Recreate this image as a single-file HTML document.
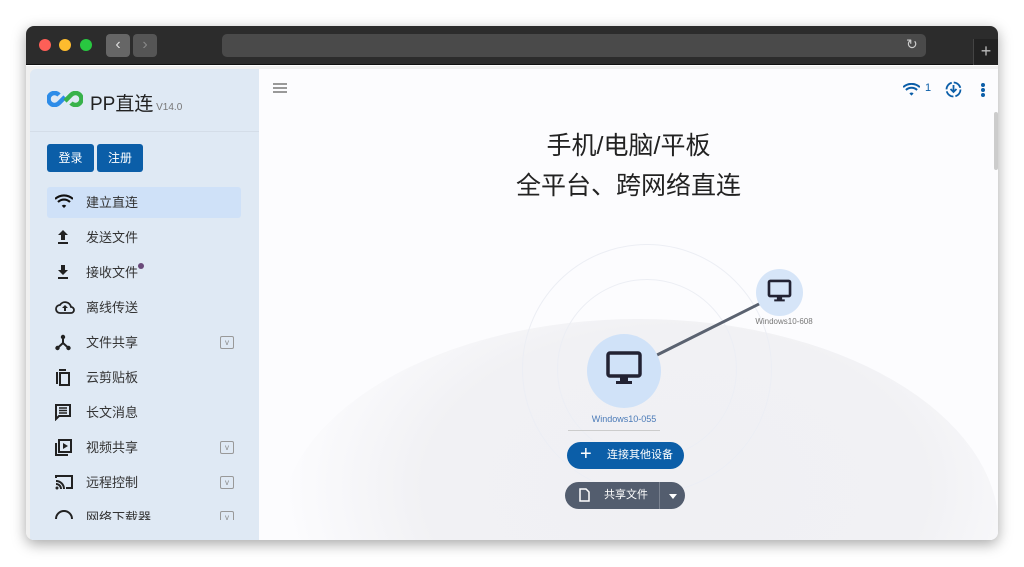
<!DOCTYPE html>
<html><head><meta charset="utf-8"><style>
*{margin:0;padding:0;box-sizing:border-box}
html,body{overflow:hidden}
body{width:1024px;height:567px;background:#fff;font-family:"Liberation Sans","Noto Sans CJK SC",sans-serif;position:relative}
.win{position:absolute;left:26px;top:26px;width:972px;height:514px;border-radius:8px;overflow:hidden;box-shadow:0 4px 14px rgba(0,0,0,.35);background:#fff}
.bar{position:absolute;left:0;top:0;width:972px;height:39px;background:#2c2c2c;border-bottom:1px solid #111}
.dot{position:absolute;top:13px;width:12px;height:12px;border-radius:50%}
.nav{position:absolute;top:8px;width:24px;height:23px;background:#555;border-radius:4px;color:#ddd;font-size:16px;text-align:center;line-height:22px}
.url{position:absolute;left:196px;top:8px;width:704px;height:23px;background:#4a4a4a;border-radius:5px}
.side{position:absolute;left:4px;top:43px;width:229px;height:471px;background:#dfe9f4;border-radius:6px 0 0 0;overflow:hidden}
.clip{position:absolute;left:0;top:0;width:229px;height:451px;overflow:hidden}
.item{position:absolute;left:17px;width:194px;height:31px;font-size:13px;color:#333;line-height:31px;padding-left:39px}
.item svg{position:absolute;left:8px;top:7px}
.v{position:absolute;left:173px;top:9px;width:14px;height:13px;border:1px solid #999;border-radius:2px;font-size:8px;line-height:11px;text-align:center;color:#888;padding:0}
.btn{position:absolute;top:75px;height:28px;background:#0b5ea8;color:#fff;font-size:12px;line-height:28px;text-align:center;border-radius:3px}
.main{position:absolute;left:233px;top:43px;width:739px;height:471px;background:#fcfcfe;overflow:hidden}
</style></head><body>
<div class="win">
<div class="bar">
<div class="dot" style="left:13px;background:#fe5f57"></div>
<div class="dot" style="left:33px;background:#febc2e"></div>
<div class="dot" style="left:54px;background:#28c840"></div>
<div class="nav" style="left:80px;background:#666">‹</div>
<div class="nav" style="left:107px;color:#888">›</div>
<div class="url"></div>
<div style="position:absolute;left:880px;top:10px;color:#ccc;font-size:14px">↻</div>
<div style="position:absolute;left:947px;top:13px;width:25px;height:26px;background:#222;color:#bbb;font-size:18px;text-align:center;line-height:25px;border-left:1px solid #444">+</div>
</div>
<div style="position:absolute;left:0;top:40px;width:972px;height:474px;background:#f0f0f0"></div>
<div class="side"><div class="clip">
<svg style="position:absolute;left:17px;top:22px" width="36" height="16" viewBox="0 0 36 16"><path d="M12 4 A6 6 0 1 0 12 12 L18 6" stroke="#2d8ce8" stroke-width="4.5" fill="none"/><path d="M18 10 L24 4 A6 6 0 1 1 24 12" stroke="#38b24a" stroke-width="4.5" fill="none"/></svg>
<div style="position:absolute;left:60px;top:20px;font-size:19px;color:#222">PP直连<span style="font-size:10px;color:#777"> V14.0</span></div>
<div style="position:absolute;left:0;top:62px;width:229px;height:1px;background:#d4dde8"></div>
<div class="btn" style="left:17px;width:47px">登录</div>
<div class="btn" style="left:67px;width:46px">注册</div>
<div class="item" style="top:118px;background:#cfe1f8;border-radius:3px">建立直连<svg width="18" height="16" viewBox="0 0 24 20"><path d="M12 18l3-3a4 4 0 0 0-6 0zM5 11a10 10 0 0 1 14 0l2-2a13 13 0 0 0-18 0zM1 7a16 16 0 0 1 22 0l2-2a19 19 0 0 0-26 0z" fill="#111"/></svg></div>
<div class="item" style="top:153px">发送文件<svg width="16" height="16" viewBox="0 0 16 16"><path d="M3 13h10v2H3zM8 1l5 5H10v5H6V6H3z" fill="#222"/></svg></div>
<div class="item" style="top:188px">接收文件<span style="position:absolute;left:91px;top:6px;width:6px;height:6px;border-radius:50%;background:#6a4a7a"></span><svg width="16" height="16" viewBox="0 0 16 16"><path d="M3 13h10v2H3zM8 11l5-5H10V1H6v5H3z" fill="#222"/></svg></div>
<div class="item" style="top:223px">离线传送<svg width="20" height="16" viewBox="0 0 20 16"><path d="M5 14a4 4 0 0 1 0-8 6 6 0 0 1 11 2 3 3 0 0 1 0 6z" fill="none" stroke="#222" stroke-width="1.8"/><path d="M10 6l3 3h-2v3H9V9H7z" fill="#222"/></svg></div>
<div class="item" style="top:258px">文件共享<svg width="16" height="17" viewBox="0 0 16 17"><circle cx="8" cy="3" r="2.2" fill="#222"/><circle cx="2.5" cy="14" r="2.2" fill="#222"/><circle cx="13.5" cy="14" r="2.2" fill="#222"/><path d="M8 3v6L2.5 14M8 9l5.5 5" stroke="#222" stroke-width="2" fill="none"/></svg><span class="v">v</span></div>
<div class="item" style="top:293px">云剪贴板<svg width="16" height="18" viewBox="0 0 16 18"><path d="M2 3v12" stroke="#222" stroke-width="2"/><rect x="5" y="4" width="9" height="12" fill="none" stroke="#222" stroke-width="2"/><path d="M4 1h7" stroke="#222" stroke-width="2"/></svg></div>
<div class="item" style="top:328px">长文消息<svg width="16" height="17" viewBox="0 0 16 17"><path d="M1 1h14v11H4l-3 3z" fill="none" stroke="#222" stroke-width="2"/><path d="M4 4h8M4 6.5h8M4 9h8" stroke="#222" stroke-width="1.5"/></svg></div>
<div class="item" style="top:363px">视频共享<svg width="17" height="17" viewBox="0 0 17 17"><path d="M1 4v12h12" fill="none" stroke="#222" stroke-width="2"/><rect x="4" y="1" width="12" height="12" fill="none" stroke="#222" stroke-width="2"/><path d="M8 4l5 3-5 3z" fill="#222"/></svg><span class="v">v</span></div>
<div class="item" style="top:398px">远程控制<svg width="18" height="16" viewBox="0 0 18 16"><path d="M1 4V2h16v12h-6" fill="none" stroke="#222" stroke-width="2"/><path d="M1 7a8 8 0 0 1 8 8M1 10a5 5 0 0 1 5 5" fill="none" stroke="#222" stroke-width="2"/><circle cx="2" cy="14" r="1.5" fill="#222"/></svg><span class="v">v</span></div>
<div class="item" style="top:433px">网络下载器<svg width="18" height="10" viewBox="0 0 18 10"><path d="M1 10a8 8 0 0 1 16 0" fill="none" stroke="#222" stroke-width="2"/></svg><span class="v">v</span></div>
</div></div>
<div class="main">
<div style="position:absolute;left:20px;top:250px;width:720px;height:420px;border-radius:50%;background:radial-gradient(ellipse at 55% 40%,#f0f0f3 0%,#f1f1f4 45%,rgba(252,252,254,0) 70%)"></div>
<div style="position:absolute;left:263px;top:175px;width:250px;height:250px;border-radius:50%;border:1px solid #eceef4"></div>
<div style="position:absolute;left:298px;top:210px;width:180px;height:180px;border-radius:50%;border:1px solid #eceef4"></div>
<div style="position:absolute;left:14px;top:14px;width:14px;height:2px;background:#999;box-shadow:0 4px 0 #999,0 8px 0 #999"></div>
<div style="position:absolute;left:0;top:57px;width:739px;text-align:center;font-size:25px;line-height:40px;color:#222">手机/电脑/平板<br>全平台、跨网络直连</div>
<svg style="position:absolute;left:0;top:0" width="739" height="471"><line x1="396" y1="287" x2="520" y2="225" stroke="#5a6270" stroke-width="3"/></svg>
<div style="position:absolute;left:328px;top:265px;width:74px;height:74px;border-radius:50%;background:#d0e2f8"></div>
<svg style="position:absolute;left:346px;top:281px" width="38" height="38" viewBox="0 0 38 38"><rect x="3" y="3" width="32" height="23" rx="2" fill="none" stroke="#223" stroke-width="3.5"/><path d="M15 27h8v4h4v3H11v-3h4z" fill="#223"/></svg>
<div style="position:absolute;left:310px;top:345px;width:110px;text-align:center;font-size:9px;color:#4a7ab8">Windows10-055</div>
<div style="position:absolute;left:309px;top:361px;width:92px;height:1px;background:#ccc"></div>
<div style="position:absolute;left:497px;top:200px;width:47px;height:47px;border-radius:50%;background:#d6e5f8"></div>
<svg style="position:absolute;left:508px;top:210px" width="25" height="25" viewBox="0 0 38 38"><rect x="3" y="3" width="32" height="23" rx="2" fill="none" stroke="#223" stroke-width="4"/><path d="M15 27h8v4h4v3H11v-3h4z" fill="#223"/></svg>
<div style="position:absolute;left:480px;top:248px;width:90px;text-align:center;font-size:8px;color:#777">Windows10-608</div>
<div style="position:absolute;left:308px;top:373px;width:117px;height:27px;border-radius:14px;background:#0b5ea8;color:#fff;font-size:11px;line-height:27px;padding-left:40px">连接其他设备<span style="position:absolute;left:13px;top:-1px;font-size:20px">+</span></div>
<div style="position:absolute;left:306px;top:413px;width:120px;height:27px;border-radius:14px;background:#535d6e;color:#fff;font-size:11px;line-height:27px;padding-left:39px">共享文件<svg style="position:absolute;left:14px;top:6px" width="11" height="14" viewBox="0 0 11 14"><path d="M1 1h6l3 3v9H1z" fill="none" stroke="#fff" stroke-width="1.5"/></svg><span style="position:absolute;left:94px;top:0;width:1px;height:27px;background:#7a8290"></span><span style="position:absolute;left:104px;top:12px;border:4px solid transparent;border-top:5px solid #fff"></span></div>
<svg style="position:absolute;left:644px;top:14px" width="17" height="14" viewBox="0 0 24 20"><path d="M12 18l3-3a4 4 0 0 0-6 0zM5 11a10 10 0 0 1 14 0l2-2a13 13 0 0 0-18 0zM1 7a16 16 0 0 1 22 0l2-2a19 19 0 0 0-26 0z" fill="#0b5ea8"/></svg>
<div style="position:absolute;left:666px;top:13px;font-size:11px;color:#0b5ea8">1</div>
<svg style="position:absolute;left:686px;top:12px" width="17" height="17" viewBox="0 0 17 17"><circle cx="8.5" cy="8.5" r="7" fill="none" stroke="#0b5ea8" stroke-width="1.8" stroke-dasharray="9 2"/><path d="M8.5 4v7M5.5 8l3 3 3-3" fill="none" stroke="#0b5ea8" stroke-width="1.8"/></svg>
<div style="position:absolute;left:722px;top:14px;width:4px;height:4px;background:#0b5ea8;border-radius:50%;box-shadow:0 5px 0 #0b5ea8,0 10px 0 #0b5ea8"></div>
<div style="position:absolute;left:735px;top:43px;width:4px;height:58px;background:#ccc;border-radius:2px"></div>
</div>
</div>
</body></html>
